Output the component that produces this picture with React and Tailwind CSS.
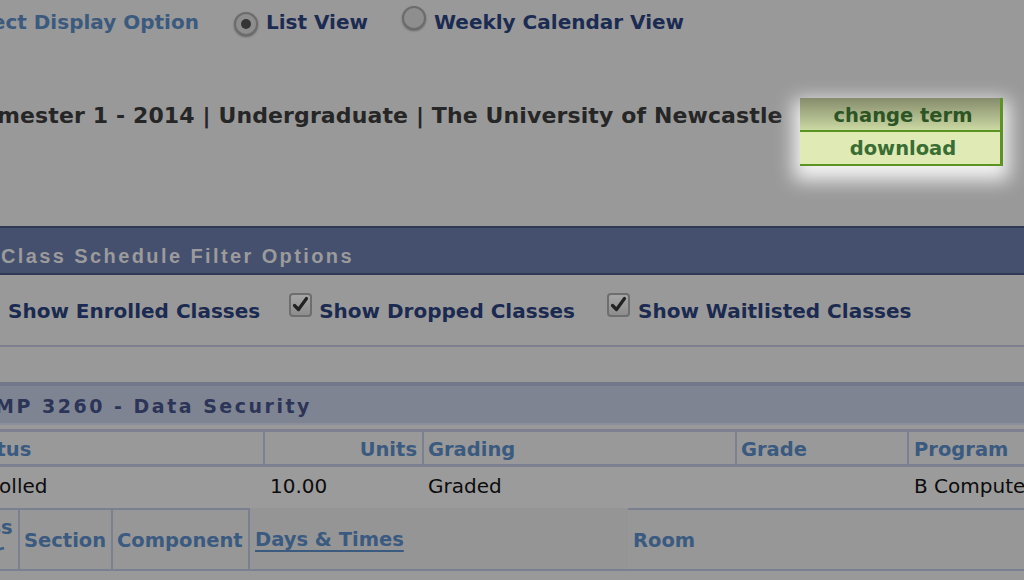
import React from "react";

const Radio = ({ checked }) => (
  <span className="relative inline-flex w-[24px] h-[24px] rounded-full border-2 border-[#6c6c6c] bg-[#8e8e8e] items-center justify-center shadow-[0_1px_2px_rgba(0,0,0,0.35)] shrink-0">
    {checked && <span className="w-[10px] h-[10px] rounded-full bg-[#353535]" />}
  </span>
);

const Check = () => (
  <span className="inline-flex w-[23px] h-[24px] rounded-[4px] border-2 border-[#6e6e6e] bg-gradient-to-b from-[#a6a6a6] to-[#8d8d8d] items-center justify-center shrink-0 mb-[14px]">
    <svg width="17" height="17" viewBox="0 0 17 17">
      <path d="M2.5 9.5 L6.5 13.5 L14.5 2.5" fill="none" stroke="#222" strokeWidth="3.2" strokeLinecap="round" strokeLinejoin="round" />
    </svg>
  </span>
);

export default function App() {
  return (
    <div className="w-[1024px] h-[580px] overflow-hidden bg-[#999999] font-['DejaVu_Sans',sans-serif] flex flex-col">
      {/* Row 1 */}
      <div className="h-[44px] flex items-center text-[20px] font-bold whitespace-nowrap shrink-0">
        <span className="ml-[-43px] text-[#3b5a7e]">Select Display Option</span>
        <span className="ml-[35px]"><Radio checked /></span>
        <span className="ml-[8px] text-[#1c2b52]">List View</span>
        <span className="ml-[34px]"><Radio /></span>
        <span className="ml-[8px] text-[#1c2b52]">Weekly Calendar View</span>
      </div>

      {/* Row 2 */}
      <div className="mt-[54px] flex items-start whitespace-nowrap shrink-0">
        <span className="ml-[-34px] text-[22px] leading-[36px] font-bold tracking-[0.12px] text-[#262626]">
          Semester 1 - 2014 | Undergraduate | The University of Newcastle
        </span>
        <div className="ml-auto mr-[21px] w-[203px] flex flex-col shadow-[0_8px_18px_6px_rgba(255,255,255,0.9)] border-r-[3px] border-[#5b9423]">
          <div className="h-[32px] bg-gradient-to-b from-[#868c6c] to-[#cbd9a3] flex items-center justify-center pl-[6px] pt-[3px] text-[19.5px] font-bold text-[#2c5424]">
            change term
          </div>
          <div className="h-[2px] bg-[#5b9423]" />
          <div className="h-[32px] bg-[#dfeab4] flex items-center justify-center pl-[6px] pt-[2px] text-[19.5px] font-bold text-[#3a6d33]">
            download
          </div>
          <div className="h-[2px] bg-[#5b9423]" />
        </div>
      </div>

      {/* Filter header bar */}
      <div className="mt-[60px] h-[49px] border-y-2 border-[#2f3857] bg-[#454f6e] flex items-center pt-[10px] shrink-0">
        <span className="ml-[1px] font-['Liberation_Sans',sans-serif] font-bold text-[20px] tracking-[2.4px] text-[#9b9b9b] whitespace-nowrap">
          Class Schedule Filter Options
        </span>
      </div>

      {/* Filter options */}
      <div className="h-[72px] border-b-2 border-[#7b7f8e] flex items-center pt-[2px] text-[20px] font-bold text-[#1b2a50] whitespace-nowrap shrink-0">
        <span className="ml-[8px]">Show Enrolled Classes</span>
        <span className="ml-[29px]"><Check /></span>
        <span className="ml-[7px]">Show Dropped Classes</span>
        <span className="ml-[32px]"><Check /></span>
        <span className="ml-[8px]">Show Waitlisted Classes</span>
      </div>

      {/* Course bar */}
      <div className="mt-[35px] h-[43px] border-t-4 border-b-2 border-t-[#72778a] border-b-[#8b8f9b] bg-[#7f8493] flex items-center pt-[3px] shrink-0 overflow-hidden">
        <span className="ml-[-40px] text-[19px] font-bold tracking-[2.5px] text-[#2c3557] whitespace-nowrap">
          COMP 3260 - Data Security
        </span>
      </div>

      {/* Table header */}
      <div className="mt-[4px] h-[38px] border-y-[3px] border-[#7c8090] flex text-[19.5px] font-bold text-[#3b5a80] whitespace-nowrap pt-[3px] shrink-0">
        <div className="w-[263px] overflow-hidden flex items-center">
          <span className="ml-[-40px]">Status</span>
        </div>
        <div className="w-[2px] bg-[#7c8090] -mt-[3px]" />
        <div className="w-[157px] flex items-center justify-end pr-[5px]">Units</div>
        <div className="w-[2px] bg-[#7c8090] -mt-[3px]" />
        <div className="w-[311px] flex items-center pl-[4px]">Grading</div>
        <div className="w-[2px] bg-[#7c8090] -mt-[3px]" />
        <div className="w-[170px] flex items-center pl-[4px]">Grade</div>
        <div className="w-[2px] bg-[#7c8090] -mt-[3px]" />
        <div className="flex-1 flex items-center pl-[5px]">Program</div>
      </div>

      {/* Data row */}
      <div className="h-[41px] flex items-center text-[20px] text-[#0c0c0c] whitespace-nowrap bg-[#9b9b9b] pb-[3px] shrink-0">
        <div className="w-[265px] overflow-hidden">
          <span className="ml-[-34px]">Enrolled</span>
        </div>
        <div className="w-[159px] pl-[5px]">10.00</div>
        <div className="w-[313px] pl-[4px]">Graded</div>
        <div className="w-[172px]" />
        <div className="flex-1 pl-[5px] overflow-hidden">B Computer Science</div>
      </div>

      {/* Lower table header */}
      <div className="h-[63px] flex text-[19.5px] font-bold text-[#3b5a80] whitespace-nowrap shrink-0">
        <div className="w-[250px] flex border-y-2 border-r-2 border-[#7b8090] bg-[#979797]">
          <div className="w-[18px] overflow-hidden flex items-center">
            <div className="w-[80px] ml-[-56px] shrink-0 text-center leading-[24px] whitespace-normal">Class Nbr</div>
          </div>
          <div className="w-[2px] bg-[#7b8090]" />
          <div className="w-[91px] flex items-center pl-[4px] pt-[2px]">Section</div>
          <div className="w-[2px] bg-[#7b8090]" />
          <div className="flex-1 flex items-center pl-[4px] pt-[2px]">Component</div>
        </div>
        <div className="w-[378px] flex items-center pl-[5px] pt-[2px] bg-[#959595] border-b-2 border-[#7b8090]">
          <span className="underline decoration-[1.5px] underline-offset-[4px]">Days &amp; Times</span>
        </div>
        <div className="flex-1 flex items-center pl-[5px] pt-[2px] border-y-2 border-[#7b8090] bg-[#979797]">Room</div>
      </div>
    </div>
  );
}
